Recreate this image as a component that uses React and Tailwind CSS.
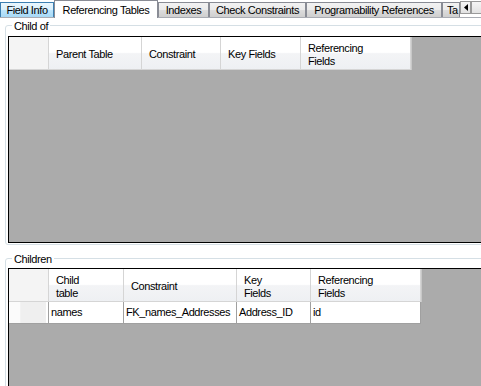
import React from 'react';

const childOfCols = [
  { label: ['Parent Table'], w: 93 },
  { label: ['Constraint'], w: 79 },
  { label: ['Key Fields'], w: 80 },
  { label: ['Referencing', 'Fields'], w: 110 },
];

const childrenCols = [
  { label: ['Child', 'table'], w: 75 },
  { label: ['Constraint'], w: 113 },
  { label: ['Key', 'Fields'], w: 74 },
  { label: ['Referencing', 'Fields'], w: 110 },
];

const childrenRows = [['names', 'FK_names_Addresses', 'Address_ID', 'id']];

function Tab({ label, w, selected, hover }) {
  if (selected) {
    return (
      <div
        className="relative z-10 -mb-px flex h-[18px] shrink-0 items-start justify-center border border-b-0 border-[#898c95] bg-white pt-px"
        style={{ width: w }}
      >
        {label}
      </div>
    );
  }
  return (
    <div
      className={`flex h-[15px] shrink-0 items-center justify-center overflow-hidden whitespace-nowrap border border-b-0 ${
        hover
          ? 'border-[#3c7fb1] bg-[linear-gradient(#eaf6fd,#d9f0fc_50%,#bee6fd_50%,#a7d9f5)]'
          : 'border-[#898c95] bg-[linear-gradient(#f2f2f2,#ebebeb_50%,#dddddd_50%,#cfcfcf)]'
      }`}
      style={{ width: w }}
    >
      {label}
    </div>
  );
}

function HeaderCell({ label, w }) {
  return (
    <div
      className="flex h-full shrink-0 flex-col justify-center border-r border-[#d5d5d5] bg-[linear-gradient(#ffffff,#ffffff_48%,#f3f4f6_52%,#eef0f3)] pl-[7px] pt-[3px] leading-[13px]"
      style={{ width: w }}
    >
      {label.map((l) => (
        <span key={l}>{l}</span>
      ))}
    </div>
  );
}

function Grid({ cols, rows, height }) {
  return (
    <div
      className="w-[490px] overflow-hidden border border-black bg-[#ababab]"
      style={{ height }}
    >
      {/* header */}
      <div className="flex h-[33px]">
        <div className="h-full w-[40px] shrink-0 border-r border-b border-[#d5d5d5] bg-[#f4f4f4]" />
        <div className="flex h-full border-b border-[#d5d5d5] shadow-[1px_0_0_#c8c8c8]">
          {cols.map((c, i) => (
            <HeaderCell key={i} label={c.label} w={c.w} />
          ))}
        </div>
      </div>
      {rows.map((r, i) => (
        <div key={i} className="flex h-[22px]">
          <div className="h-full w-[40px] shrink-0 border-r border-b border-[#a0a0a0] bg-[linear-gradient(to_right,#fbfbfb_28%,#efefef_30%,#efefef_94%,#ffffff_95%)]" />
          {r.map((v, j) => (
            <div
              key={j}
              className="flex h-full shrink-0 items-center border-r border-b border-[#a0a0a0] bg-white pl-[2px]"
              style={{ width: cols[j].w }}
            >
              {v}
            </div>
          ))}
        </div>
      ))}
    </div>
  );
}

function GroupBox({ title, children, className = '' }) {
  return (
    <div className={`relative ml-[5px] w-[495px] rounded-[3px] border border-[#d5dfe5] ${className}`}>
      <span className="absolute -top-[7px] left-[6px] bg-white px-[2px] leading-[14px]">{title}</span>
      {children}
    </div>
  );
}

export default function App() {
  return (
    <div className="h-[386px] w-[481px] overflow-hidden bg-white text-[11px] tracking-[-0.4px] text-black font-['Liberation_Sans',Arial,sans-serif]">
      {/* Tab strip */}
      <div className="flex h-[17px] items-end">
        <Tab label="Field Info" w={54} hover />
        <Tab label="Referencing Tables" w={104} selected />
        <Tab label="Indexes" w={51} />
        <Tab label="Check Constraints" w={97} />
        <Tab label="Programability References" w={136} />
        <div className="flex h-[15px] w-[18px] shrink-0 items-center border border-b-0 border-[#898c95] bg-[linear-gradient(#f2f2f2,#ebebeb_50%,#dddddd_50%,#cfcfcf)] pl-[4px]">
          Ta
        </div>
        <div className="flex h-[15px] shrink-0 self-start pt-[1px]">
          <div className="flex h-[13px] w-[11px] items-center justify-center border border-[#9a9a9a] bg-[linear-gradient(#f5f5f5,#e2e2e2)]">
            <svg width="4" height="7" viewBox="0 0 4 7">
              <path d="M4 0V7L0 3.5Z" fill="#000" />
            </svg>
          </div>
          <div className="flex h-[13px] w-[11px] items-center justify-center border border-[#9a9a9a] bg-[linear-gradient(#f5f5f5,#e2e2e2)]" />
        </div>
      </div>
      {/* Tab page */}
      <div className="h-[369px] border-t border-[#a9acb3] pt-[7px]">
        <GroupBox title="Child of" className="h-[220px] pl-[2px] pt-[10px]">
          <Grid cols={childOfCols} rows={[]} height={207} />
        </GroupBox>
        <GroupBox title="Children" className="mt-[13px] h-[140px] pl-[2px] pt-[9px]">
          <Grid cols={childrenCols} rows={childrenRows} height={140} />
        </GroupBox>
      </div>
    </div>
  );
}
